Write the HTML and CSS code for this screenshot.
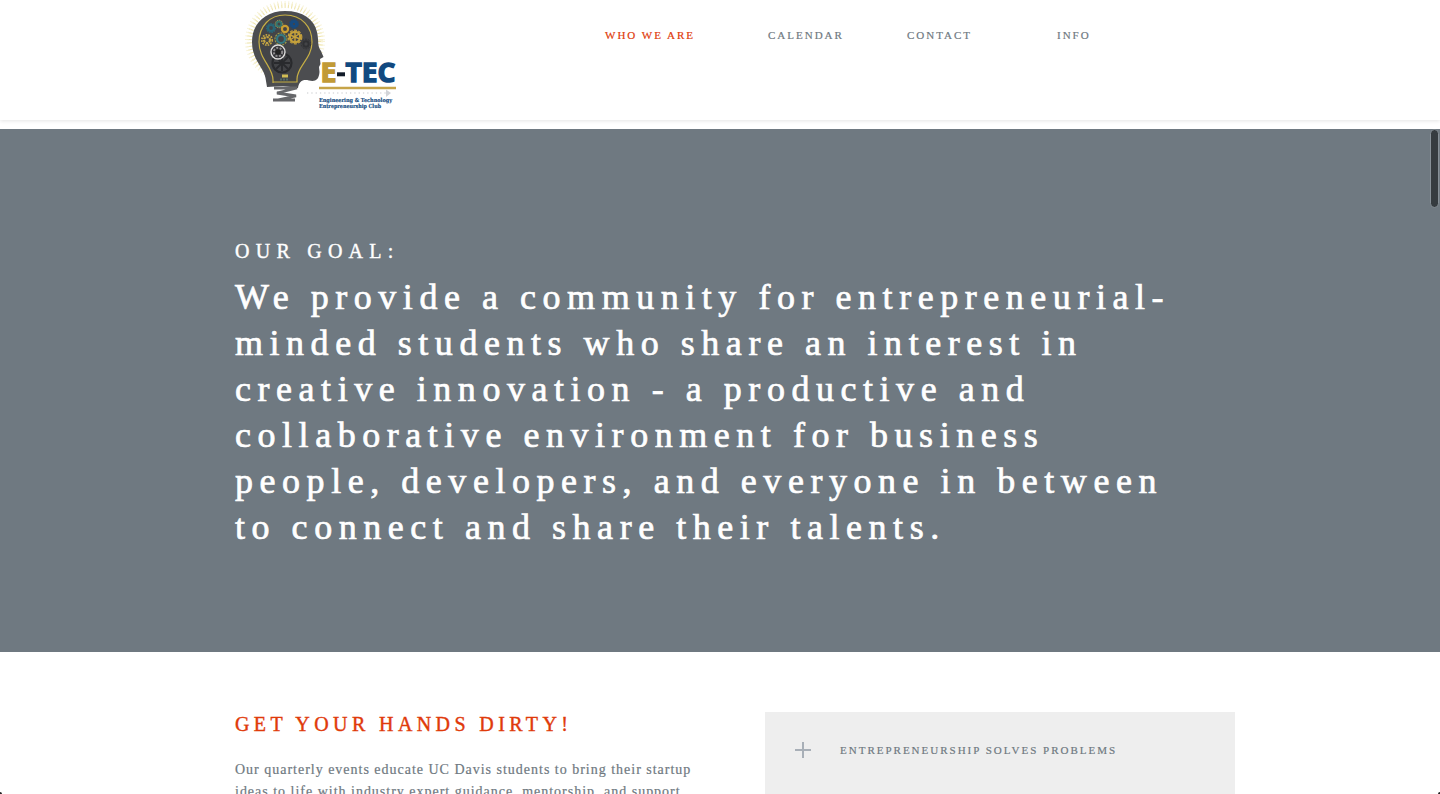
FILE: index.html
```html
<!DOCTYPE html>
<html lang="en">
<head>
<meta charset="utf-8">
<title>E-TEC</title>
<link rel="stylesheet" href="styles.css">
</head>
<body>
<header class="header">
  <div class="container header-inner">
    <a class="logo">
      <svg width="170" height="120" viewBox="0 0 170 120">
        <circle cx="50" cy="41" r="35.5" fill="none" stroke="#efe5ad" stroke-width="5" stroke-dasharray="1.1 2.3"/>
        <circle cx="50" cy="41" r="38" fill="none" stroke="#f7f2d5" stroke-width="4" stroke-dasharray="1 2.64"/>
        <path d="M32 87L30.500 78C29 68 17 60 17 42C17 23 31 11 50 11C68 11 79 19 82 32C84 40 82 46 86 51L88.500 57L85 59L85.500 64L84 67L84.500 72C84 80 80 82 74 80.500C68 79 64 81 63 88L48 86Z" fill="#4c4d50"/>
        <path d="M38 83V80C38 67 24 59 24 42C24 26 35 15 50 15C67 15 77 27 77 42C77 59 62 66 62 79V82H38Z" fill="#434447" stroke="#c6af45" stroke-width="1.200"/>
        <path d="M39 88H62L42 93L61 96L42 100M38 100H60" fill="none" stroke="#66676a" stroke-width="2.800"/>
        <g fill="none" stroke-width="2.200">
          <circle cx="36" cy="28" r="3" stroke="#286779"/><circle cx="36" cy="28" r="4.500" stroke="#286779" stroke-width="1.200" stroke-dasharray="1.5 1"/>
          <circle cx="44" cy="24" r="2.500" stroke="#35766f" stroke-width="2"/><circle cx="44" cy="24" r="3.800" stroke="#c1aa4c" stroke-width=".8" stroke-dasharray="1.2 1"/>
          <circle cx="50" cy="29" r="3.100" stroke="#c99e31"/>
          <circle cx="59" cy="24" r="2.600" stroke="#174b80" stroke-width="3"/><circle cx="59" cy="24" r="4.600" stroke="#174b80" stroke-width="1" stroke-dasharray="1.5 1"/>
          <circle cx="32" cy="40" r="3" stroke="#c3a443" stroke-dasharray="2.500 .8"/><circle cx="32" cy="40" r="5.200" stroke="#c3a443" stroke-width="1.700" stroke-dasharray="1.7 1.1"/>
          <circle cx="46" cy="39" r="4" stroke="#347a83"/><circle cx="46" cy="39" r="6" stroke="#98994c" stroke-width="1.200" stroke-dasharray="2 1"/>
          <circle cx="60" cy="37" r="5.200" stroke="#c5a13b"/><circle cx="60" cy="37" r="6.800" stroke="#c5a13b" stroke-width="1.200" stroke-dasharray="3 1.4"/>
          <path d="M60 32V42M55 35L65 39M55 40L64 34" stroke="#c5a13b" stroke-width="1.500"/>
          <circle cx="71" cy="44" r="2.700" stroke="#303134" stroke-width="2"/><circle cx="71" cy="44" r="4.800" stroke="#303134" stroke-width="1" stroke-dasharray="2 1"/>
          <circle cx="47" cy="63" r="9.500" stroke="#292a2d"/><path d="M47 55V71M39 63H55M41 57L53 69M53 57L41 69" stroke="#292a2d" stroke-width="1.800"/>
          <circle cx="43" cy="52" r="7" fill="#343438" stroke="#dddcdb" stroke-width="1.400"/><circle cx="43" cy="52" r="4.200" stroke="#8d8b8d" stroke-width="2" stroke-dasharray="2 1.5"/>
          <circle cx="43" cy="52" r="1.500" stroke="#222"/>
        </g>
        <path d="M47 76H53" stroke="#d1bd54" stroke-width="3"/><path d="M45 79.500H54" stroke="#516b68" stroke-width="2" stroke-dasharray="2 1"/>
        <text x="85.500" y="82" class="logo-name gold" textLength="16" lengthAdjust="spacingAndGlyphs">E</text>
        <path d="M102 74.300H110" stroke="#111b29" stroke-width="4"/>
        <text x="110.500" y="82" class="logo-name navy" textLength="50" lengthAdjust="spacingAndGlyphs">TEC</text>
        <path d="M84 88H161" stroke="#c6a448" stroke-width="2.500"/>
        <path d="M72 93H151" stroke="#dadbdd" stroke-width="1.300" stroke-dasharray="1.3 3"/><path d="M151 89.500V97L156 93Z" fill="#d2d4d8"/>
        <text x="84" y="102" class="logo-tag navy" textLength="73" lengthAdjust="spacingAndGlyphs">Engineering &amp; Technology</text>
        <text x="84" y="107.700" class="logo-tag navy" textLength="62" lengthAdjust="spacingAndGlyphs">Entrepreneurship Club</text>
      </svg>
    </a>
    <nav class="nav">
      <a class="active">WHO WE ARE</a><a class="calendar">CALENDAR</a><a class="contact">CONTACT</a><a>INFO</a>
    </nav>
  </div>
</header>
<main>
  <section class="hero">
    <div class="container">
      <h2 class="eyebrow">OUR GOAL:</h2>
      <h1 class="goal">We provide a community for entrepreneurial-<br>minded students who share an interest in<br>creative innovation - a productive and<br>collaborative environment for business<br>people, developers, and everyone in between<br>to connect and share their talents.</h1>
    </div>
    <span class="scroll-thumb"></span>
  </section>
  <section class="details">
    <article>
      <h2 class="section-title">GET YOUR HANDS DIRTY!</h2>
      <p class="copy">Our quarterly events educate UC Davis students to bring their startup<br>ideas to life with industry expert guidance, mentorship, and support.</p>
    </article>
    <aside class="accordion">
      <svg class="plus" width="16" height="16" viewBox="0 0 16 16"><path d="M0 8H16M8 0V16" stroke="#a8afb7" stroke-width="2"/></svg>
      <span>ENTREPRENEURSHIP SOLVES PROBLEMS</span>
    </aside>
  </section>
</main>
<i class="corner left"></i><i class="corner right"></i>
</body>
</html>
```
FILE: styles.css
```css
* { box-sizing: border-box; }
body {
  margin: 0;
  height: 794px;
  overflow: hidden;
  background: #fff;
  color: #6f7981;
  font-family: "Liberation Serif", "Times New Roman", serif;
  -webkit-text-stroke: .2px currentColor;
}
h1, h2, p { margin: 0; font-weight: 400; }
.container { width: 970px; margin: 0 auto; }
.header { height: 120px; margin-bottom: 9px; box-shadow: 0 1px 4px rgba(0, 0, 0, .11); }
.header-inner { display: flex; }
.logo { width: 170px; height: 120px; -webkit-text-stroke: 0; }
.logo svg { display: block; }
.logo-name { font: 700 27px "Open Sans", sans-serif; stroke-width: 1.4; }
.logo-tag { font: 700 5.5px "DejaVu Serif", serif; stroke-width: .15; }
.gold { fill: #c19a36; stroke: #c19a36; }
.navy { fill: #114980; stroke: #114980; }
.nav { display: flex; margin-left: 200px; padding-top: 28px; font-size: 11px; line-height: 14px; letter-spacing: 2px; white-space: nowrap; }
.nav a { width: 163px; }
.nav .calendar { width: 139px; }
.nav .contact { width: 150px; }
.nav .active { color: #e03a0a; }
.hero { position: relative; height: 523px; padding-top: 109px; background: #6f7981; color: #fff; }
.eyebrow { height: 36px; font-size: 20px; line-height: 26px; letter-spacing: 6.25px; -webkit-text-stroke-width: .4px; }
.goal { font-size: 36px; line-height: 46px; letter-spacing: 6.54px; white-space: nowrap; -webkit-text-stroke-width: .7px; }
.scroll-thumb { position: absolute; top: 0; right: 1px; width: 9px; height: 79px; border: 1px solid #879097; border-radius: 5px; background: #363c40; }
.details { display: grid; grid-template-columns: 470px 470px; gap: 60px; width: 1000px; margin-left: 235px; padding-top: 60px; }
.section-title { margin-top: -1px; color: #e03a0a; font-size: 20px; line-height: 26px; letter-spacing: 4.4px; white-space: nowrap; -webkit-text-stroke-width: .4px; }
.copy { margin-top: 22px; font-size: 14px; line-height: 22px; letter-spacing: .99px; white-space: nowrap; }
.accordion { display: flex; align-items: flex-start; gap: 29px; height: 120px; padding: 30px; background: #eee; font-size: 11px; line-height: 16px; letter-spacing: 2px; }
.plus { flex: none; }
.corner { position: absolute; bottom: 0; width: 2px; height: 2px; background: #222; }
.left { left: 0; border-top-right-radius: 2px; }
.right { right: 0; border-top-left-radius: 2px; }
```
